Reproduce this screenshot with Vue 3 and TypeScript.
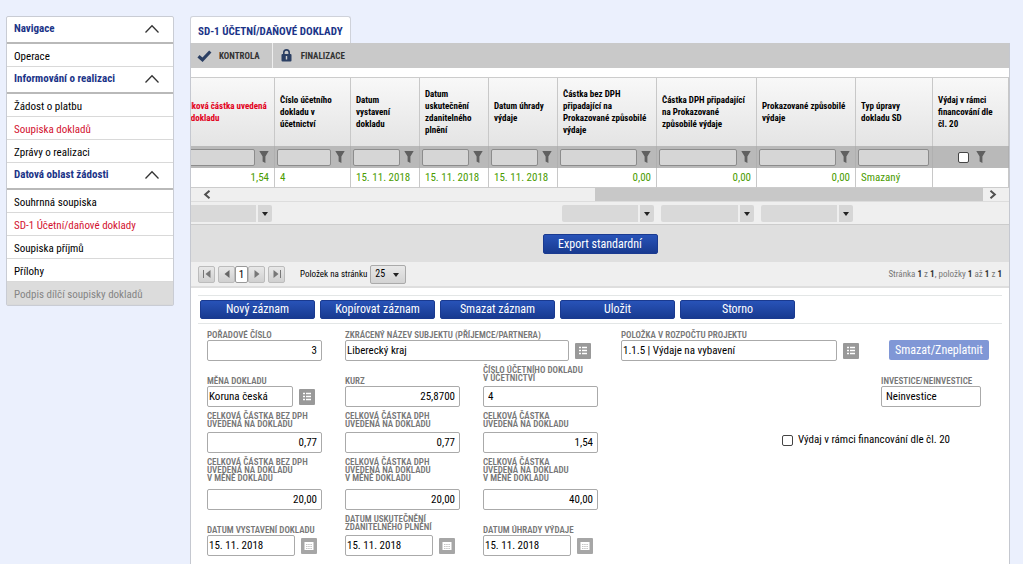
<script setup lang="ts">
interface NavItem { label: string; state?: 'active' | 'disabled' }
interface NavGroup { title: string; items: NavItem[] }
interface Column { label: string; value: string; width: number; align?: 'right'; filter: 'text' | 'plain' | 'check'; combo?: boolean; required?: boolean }
interface Field { id: string; lines: string[]; value: string; kind?: 'number' | 'text' | 'list' | 'date'; size?: string }

const nav: NavGroup[] = [
  { title: 'Navigace', items: [{ label: 'Operace' }] },
  {
    title: 'Informování o realizaci',
    items: [{ label: 'Žádost o platbu' }, { label: 'Soupiska dokladů', state: 'active' }, { label: 'Zprávy o realizaci' }],
  },
  {
    title: 'Datová oblast žádosti',
    items: [
      { label: 'Souhrnná soupiska' },
      { label: 'SD-1 Účetní/daňové doklady', state: 'active' },
      { label: 'Soupiska příjmů' },
      { label: 'Přílohy' },
      { label: 'Podpis dílčí soupisky dokladů', state: 'disabled' },
    ],
  },
]

const columns: Column[] = [
  { label: 'Celková částka uvedená na dokladu', value: '1,54', width: 100, align: 'right', filter: 'text', combo: true, required: true },
  { label: 'Číslo účetního dokladu v účetnictví', value: '4', width: 76, filter: 'text' },
  { label: 'Datum vystavení dokladu', value: '15. 11. 2018', width: 69, filter: 'text' },
  { label: 'Datum uskutečnění zdanitelného plnění', value: '15. 11. 2018', width: 69, filter: 'text' },
  { label: 'Datum úhrady výdaje', value: '15. 11. 2018', width: 69, filter: 'text' },
  { label: 'Částka bez DPH připadající na Prokazované způsobilé výdaje', value: '0,00', width: 99, align: 'right', filter: 'text', combo: true },
  { label: 'Částka DPH připadající na Prokazované způsobilé výdaje', value: '0,00', width: 100, align: 'right', filter: 'text', combo: true },
  { label: 'Prokazované způsobilé výdaje', value: '0,00', width: 99, align: 'right', filter: 'text', combo: true },
  { label: 'Typ úpravy dokladu SD', value: 'Smazaný', width: 77, filter: 'plain' },
  { label: 'Výdaj v rámci financování dle čl. 20', value: '', width: 76, filter: 'check' },
]
const total = columns.reduce((sum, c) => sum + c.width, 0)
const share = (c: Column) => ({ width: `${(c.width / total) * 100}%` })

const actions = ['Nový záznam', 'Kopírovat záznam', 'Smazat záznam', 'Uložit', 'Storno']

const rows: Field[][] = [
  [
    { id: 'poradi', lines: ['Pořadové číslo'], value: '3', kind: 'number' },
    { id: 'subjekt', lines: ['Zkrácený název subjektu (příjemce/partnera)'], value: 'Liberecký kraj', kind: 'list', size: 'two' },
    { id: 'polozka', lines: ['Položka v rozpočtu projektu'], value: '1.1.5 | Výdaje na vybavení', kind: 'list', size: 'wide' },
  ],
  [
    { id: 'mena', lines: ['Měna dokladu'], value: 'Koruna česká', kind: 'list' },
    { id: 'kurz', lines: ['Kurz'], value: '25,8700', kind: 'number' },
    { id: 'cislo', lines: ['Číslo účetního dokladu', 'v účetnictví'], value: '4', kind: 'text' },
    { id: 'investice', lines: ['Investice/Neinvestice'], value: 'Neinvestice', kind: 'text', size: 'last' },
  ],
  [
    { id: 'bez', lines: ['Celková částka bez DPH', 'uvedená na dokladu'], value: '0,77', kind: 'number' },
    { id: 'dph', lines: ['Celková částka DPH', 'uvedená na dokladu'], value: '0,77', kind: 'number' },
    { id: 'celkem', lines: ['Celková částka', 'uvedená na dokladu'], value: '1,54', kind: 'number' },
  ],
  [
    { id: 'bezm', lines: ['Celková částka bez DPH', 'uvedená na dokladu', 'v měně dokladu'], value: '20,00', kind: 'number' },
    { id: 'dphm', lines: ['Celková částka DPH', 'uvedená na dokladu', 'v měně dokladu'], value: '20,00', kind: 'number' },
    { id: 'celkemm', lines: ['Celková částka', 'uvedená na dokladu', 'v měně dokladu'], value: '40,00', kind: 'number' },
  ],
  [
    { id: 'dvyst', lines: ['Datum vystavení dokladu'], value: '15. 11. 2018', kind: 'date' },
    { id: 'dusk', lines: ['Datum uskutečnění', 'zdanitelného plnění'], value: '15. 11. 2018', kind: 'date' },
    { id: 'duhr', lines: ['Datum úhrady výdaje'], value: '15. 11. 2018', kind: 'date' },
  ],
]
</script>

<template>
  <div class="page">
    <nav class="side">
      <section v-for="group in nav" :key="group.title">
        <button type="button" class="group">
          <span>{{ group.title }}</span>
          <svg width="16" height="10" viewBox="0 0 16 10"><path d="M1.5 8.5 8 1.8l6.500 6.700" fill="none" stroke="#333" stroke-width="1.300" /></svg>
        </button>
        <a v-for="item in group.items" :key="item.label" href="#" class="item" :class="item.state">{{ item.label }}</a>
      </section>
    </nav>

    <main class="main">
      <a href="#" class="tab">SD-1 ÚČETNÍ/DAŇOVÉ DOKLADY</a>
      <div class="panel">
        <div class="toolbar">
          <button type="button" class="tool">
            <svg width="15" height="12" viewBox="0 0 15 12"><path d="M1.500 6.200 5.500 9.800 13.300 1.500" fill="none" stroke="#2b3f63" stroke-width="3.200" /></svg>
            <span>KONTROLA</span>
          </button>
          <button type="button" class="tool">
            <svg width="11" height="13" viewBox="0 0 11 13"><path d="M2.800 6V3.600a2.700 2.700 0 0 1 5.400 0V6" fill="none" stroke="#2b3f63" stroke-width="1.600" /><rect x=".5" y="5" width="10" height="7.500" rx="1" fill="#2b3f63" /><path d="M5.500 7v3.500" stroke="#d0d0d0" stroke-width="1.400" /></svg>
            <span>FINALIZACE</span>
          </button>
        </div>

        <div class="clip top">
          <table>
            <colgroup><col v-for="c in columns" :key="c.label" :style="share(c)" /></colgroup>
            <thead>
              <tr class="head">
                <th v-for="c in columns" :key="c.label" scope="col" :class="{ required: c.required }">{{ c.label }}</th>
              </tr>
              <tr class="filters">
                <td v-for="c in columns" :key="c.label">
                  <div class="filter" :class="c.filter">
                    <input v-if="c.filter === 'check'" type="checkbox" class="box" :aria-label="c.label" />
                    <input v-else type="text" class="ftext" :aria-label="c.label" />
                    <button v-if="c.filter !== 'plain'" type="button" class="funnel" aria-label="Filtr">
                      <svg width="10" height="12" viewBox="0 0 10 12"><path d="M.3 0h9.400L6.400 5.500V12L3.600 10.500v-5z" fill="#606060" /></svg>
                    </button>
                  </div>
                </td>
              </tr>
            </thead>
            <tbody>
              <tr class="data"><td v-for="c in columns" :key="c.label" :class="c.align">{{ c.value }}</td></tr>
            </tbody>
          </table>
        </div>

        <div class="scroll">
          <button type="button" aria-label="Posunout vlevo"><svg width="8" height="9" viewBox="0 0 8 9"><path d="M6.500.8 2.200 4.500l4.300 3.700" fill="none" stroke="#505050" stroke-width="2" /></svg></button>
          <div class="track"><div class="thumb"></div></div>
          <button type="button" aria-label="Posunout vpravo"><svg width="8" height="9" viewBox="0 0 8 9"><path d="M1.500.8 5.800 4.500 1.500 8.200" fill="none" stroke="#505050" stroke-width="2" /></svg></button>
        </div>

        <div class="clip foot">
          <table>
            <colgroup><col v-for="c in columns" :key="c.label" :style="share(c)" /></colgroup>
            <tbody>
              <tr>
                <td v-for="c in columns" :key="c.label">
                  <div v-if="c.combo" class="combo">
                    <select :aria-label="c.label"><option></option></select>
                    <svg width="6" height="4" viewBox="0 0 6 4"><path d="M0 0h6L3 4z" fill="#222" /></svg>
                  </div>
                </td>
              </tr>
            </tbody>
          </table>
        </div>

        <div class="export"><button type="button" class="blue">Export standardní</button></div>

        <div class="pager">
          <button type="button" class="pg" aria-label="První"><svg width="10" height="8" viewBox="0 0 10 8"><path d="M1 0h1v8H1zM8.500 0v8L3.500 4z" fill="#777" /></svg></button>
          <button type="button" class="pg prev" aria-label="Předchozí"><svg width="10" height="8" viewBox="0 0 10 8"><path d="M7.500 0v8L2.500 4z" fill="#666" /></svg></button>
          <button type="button" class="current">1</button>
          <button type="button" class="pg next" aria-label="Další"><svg width="10" height="8" viewBox="0 0 10 8"><path d="M2.500 0v8l5-4z" fill="#777" /></svg></button>
          <button type="button" class="pg" aria-label="Poslední"><svg width="10" height="8" viewBox="0 0 10 8"><path d="M8 0h1v8H8zM1.500 0v8l5-4z" fill="#777" /></svg></button>
          <label for="size">Položek na stránku</label>
          <div class="size">
            <select id="size"><option>25</option></select>
            <svg width="6" height="4" viewBox="0 0 6 4"><path d="M0 0h6L3 4z" fill="#222" /></svg>
          </div>
          <p class="info">Stránka <b>1</b> z <b>1</b>, položky <b>1</b> až <b>1</b> z <b>1</b></p>
        </div>

        <div class="detail">
          <div class="actions"><button v-for="a in actions" :key="a" type="button" class="blue">{{ a }}</button></div>
          <form class="form" @submit.prevent>
            <div v-for="(row, r) in rows" :key="r" class="row" :class="'r' + r">
              <div v-for="f in row" :key="f.id" class="field" :class="f.size">
                <label :for="f.id" :class="'n' + f.lines.length"><span v-for="line in f.lines" :key="line">{{ line }}</span></label>
                <div class="control">
                  <input :id="f.id" type="text" :class="f.kind" :value="f.value" />
                  <button v-if="f.kind === 'list'" type="button" class="ico" aria-label="Vybrat">
                    <svg width="16" height="16" viewBox="0 0 16 16"><rect width="16" height="16" rx="1" fill="#999" /><path d="M4 4.500h2M7 4.500h5M4 7.500h2M7 7.500h5M4 10.500h2M7 10.500h5" stroke="#fff" stroke-width="1.400" /></svg>
                  </button>
                  <button v-if="f.kind === 'date'" type="button" class="ico cal" aria-label="Kalendář">
                    <svg width="16" height="16" viewBox="0 0 16 16"><rect width="16" height="16" rx="1" fill="#a6a6a6" /><rect x="3.500" y="4" width="9" height="8" fill="#fff" /><path d="M5 6.500h6M5 8.500h6M5 10.500h6" stroke="#c4c4c4" stroke-width="1" stroke-dasharray="1.500 .7" /></svg>
                  </button>
                </div>
              </div>
              <button v-if="r === 0" type="button" class="void">Smazat/Zneplatnit</button>
              <label v-if="r === 2" class="check"><input type="checkbox" class="box" />Výdaj v rámci financování dle čl. 20</label>
            </div>
          </form>
        </div>
      </div>
    </main>
  </div>
</template>

<style>
body { margin: 0; background: #ebf0fd; }
</style>

<style scoped>
* { box-sizing: border-box; }
.page { display: flex; align-items: flex-start; gap: 16px; padding: 16px 13px 0 6px; height: 100vh; overflow: hidden; color: #000; font: 11px/16px "Roboto Condensed", "Liberation Sans Narrow", Roboto, sans-serif; }
button, input, select { font: inherit; color: inherit; margin: 0; padding: 0; }
button { border: 0; background: none; }
a { color: inherit; text-decoration: none; }
svg { display: block; flex: none; }

.side { width: 168px; flex: none; border: 1px solid #c9ccd4; border-radius: 2px; background: #fff; }
.group { display: flex; align-items: center; justify-content: space-between; width: 100%; height: 27px; padding: 0 13px 1px 7px; border-bottom: 2px solid #b9b9b9; color: #1b3488; font-weight: 700; }
.item { display: block; height: 23px; padding: 0 7px; border-bottom: 1px solid #d9d9d9; line-height: 25px; }
.active { color: #d3122f; }
.disabled { background: #dcdcdc; color: #858585; }

.main { flex: 1; min-width: 0; display: flex; flex-direction: column; align-items: flex-start; align-self: stretch; }
.tab { height: 27px; padding: 0 7px; border: 1px solid #cfd2da; border-bottom: 0; border-radius: 3px 3px 0 0; background: #fff; color: #1b3488; font-weight: 700; line-height: 29px; white-space: nowrap; }
.panel { flex: 1; width: 100%; border: solid #c5c8d0; border-width: 0 1px; background: #fff; }
.toolbar { display: flex; height: 25px; background: #c9c9c9; }
.tool { display: flex; align-items: center; gap: 7px; padding: 0 12px 0 6px; border-right: 1px solid #eee; color: #333; font-size: 9px; font-weight: 700; }
.tool + .tool { border: 0; gap: 9px; padding-left: 8px; }

.clip { display: flex; justify-content: flex-end; overflow: hidden; }
.top { margin-top: 9px; border-top: 1px solid #ccc; }
table { flex: none; width: calc(100% + 16px); border-collapse: separate; border-spacing: 0; table-layout: fixed; }
th, td { padding: 0; border-right: 1px solid #c8c8c8; }
th { height: 68px; padding: 0 6px 0 5px; background: linear-gradient(#f8f8f8, #e4e4e4); font-size: 9px; line-height: 12px; text-align: left; vertical-align: middle; }
.required { color: #e2001a; }
.filters td { height: 22px; background: #b9b9b9; border-color: #b0b0b0; }
.filter { display: flex; align-items: center; gap: 4px; padding: 0 5px 0 2px; }
.check.filter { justify-content: center; gap: 7px; padding: 0 0 0 4px; }
.ftext { flex: 1; min-width: 0; height: 17px; border: 1px solid #8c8c8c; border-radius: 2px; background: #d6d6d6; }
.plain.filter { padding-right: 3px; }
.data td { height: 20px; padding: 0 5px; border-bottom: 1px solid #ccc; color: #4a9c00; line-height: 19px; white-space: nowrap; }
.data .right { text-align: right; }
.box { appearance: none; width: 11px; height: 11px; border: 1px solid #444; border-radius: 2px; background: #fff; }

.scroll { display: flex; height: 13px; background: #efefef; }
.scroll button { display: grid; place-items: center; width: 32px; flex: none; }
.scroll button:last-child { width: 26px; padding-right: 6px; }
.track { flex: 1; display: flex; justify-content: flex-end; }
.thumb { width: 51%; background: #c8c8c8; }
.foot { border-top: 1px solid #ddd; border-bottom: 1px solid #ccc; background: #efefef; }
.foot td { height: 22px; padding: 0 3px 0 4px; border: 0; }
.combo, .size { position: relative; }
.combo select { display: block; appearance: none; width: 100%; height: 17px; border: 0; border-radius: 2px; background: linear-gradient(90deg, #d9d9d9 calc(100% - 16px), #efefef 0 calc(100% - 14px), #d6d6d6 0); }
.combo svg { position: absolute; right: 4px; top: 7px; pointer-events: none; }

.export { display: flex; justify-content: center; align-items: center; height: 37px; background: #dfdfdf; }
.blue { height: 19px; width: 115px; border: 1px solid #1a3a90; border-radius: 2px; background: linear-gradient(#2853b8, #183a90); color: #fff; font-size: 12px; line-height: 17px; }
.export .blue { height: 20px; line-height: 18px; }

.pager { display: flex; align-items: center; height: 26px; padding: 0 7px; border-bottom: 2px solid #dedede; background: #efefef; }
.pg { display: grid; place-items: center; width: 17px; height: 17px; border: 1px solid #bcbcbc; border-radius: 2px; background: linear-gradient(#e8e8e8, #d0d0d0); }
.prev { margin-left: 3px; }
.next { margin-right: 3px; }
.current { width: 13px; height: 17px; border: 1px solid #999; border-radius: 2px; background: #fff; }
.pager label { margin: 0 3px 0 15px; font-size: 9px; }
.size select { display: block; appearance: none; width: 36px; height: 19px; padding-left: 4px; border: 1px solid #aaa; border-radius: 2px; background: linear-gradient(#e8e8e8, #d3d3d3); font-size: 10px; }
.size svg { position: absolute; right: 7px; top: 8px; pointer-events: none; }
.info { margin: 0 0 0 auto; color: #777; font-size: 9px; }
.info b { color: #333; }

.detail { margin: 7px 7px 0; border-top: 1px solid #e3e6e6; }
.actions { display: flex; gap: 5px; padding: 4px 2px; border-bottom: 1px solid #e3e6e6; }
.form { padding: 0 9px; }
.row { display: flex; align-items: flex-end; gap: 23px; height: 46px; }
.r0 { height: 37px; }
.r3 { height: 57px; }
.field { width: 115px; flex: none; }
.two { width: 253px; }
.wide { width: 245px; }
.last { width: 100px; margin-left: auto; margin-right: 12px; }
.field label { display: block; color: #777; font-size: 9px; font-weight: 600; line-height: 8px; text-transform: uppercase; white-space: nowrap; padding-bottom: 1px; }
.field label.n2 { padding-bottom: 4px; }
.field label.n3 { padding-bottom: 7px; }
.field label span { display: block; }
.control { display: flex; align-items: center; gap: 6px; }
.control input { flex: 1; min-width: 0; height: 21px; padding: 0 4px; border: 1px solid #aaa; border-radius: 2px; background: #fff; }
.control .number { text-align: right; }
.control .list, .control .date { padding: 0 1px; }
.ico { width: 16px; height: 16px; margin-right: 7px; }
.cal { margin-right: 5px; }
.void { width: 100px; height: 20px; margin: 0 4px 1px auto; border-radius: 2px; background: #8097d6; color: #fff; font-size: 12px; line-height: 20px; }
label.check { display: flex; align-items: center; gap: 5px; height: 26px; margin-left: auto; margin-right: 43px; }
</style>
